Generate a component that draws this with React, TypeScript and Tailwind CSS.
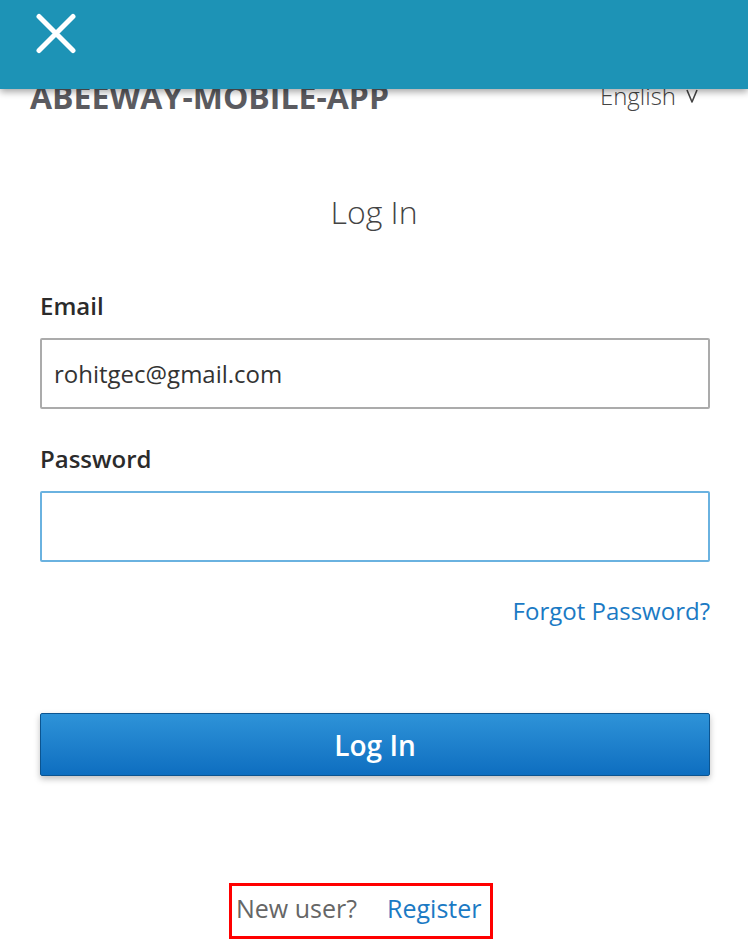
import React from "react";

function CloseIcon() {
  return (
    <svg width="42" height="41" viewBox="0 0 42 41" fill="none" aria-hidden="true">
      <path d="M4 3.5L38 37.5M38 3.5L4 37.5" stroke="#ffffff" strokeWidth="5" strokeLinecap="round" />
    </svg>
  );
}

function Chevron() {
  return (
    <svg width="12" height="14" viewBox="0 0 12 14" fill="none" aria-hidden="true">
      <path d="M1 1L6 13L11 1" stroke="#444" strokeWidth="1.6" strokeLinejoin="round" />
    </svg>
  );
}

export default function App() {
  return (
    <div className="relative h-[946px] w-[748px] overflow-hidden bg-white font-['Open_Sans','Liberation_Sans',sans-serif]">
      {/* fixed app bar, lies over the page title */}
      <header className="absolute inset-x-0 top-0 z-10 h-[89px] bg-[#1d93b6] pl-[35px] pt-[13px] shadow-[0_3px_7px_rgba(0,0,0,0.35)]">
        <CloseIcon />
      </header>

      <div className="flex items-start justify-between pl-[30px] pr-[50px] pt-[79px]">
        <h1 className="text-[32px] font-bold leading-[36px] text-[#5b5b60]">ABEEWAY-MOBILE-APP</h1>
        <div className="mt-px flex items-center gap-[10px] text-[24px] font-light leading-[32px] text-[#444]">
          <span>English</span>
          <Chevron />
        </div>
      </div>

      <h2 className="mt-[77px] text-center text-[32px] font-light leading-[40px] text-[#444]">Log In</h2>

      <form className="flex flex-col pl-[40px] pr-[38px]">
        <label className="mt-[58px] text-[24px] font-semibold leading-[32px] text-[#2b2b2b]">Email</label>
        <input
          type="email"
          defaultValue="rohitgec@gmail.com"
          className="mt-[16px] h-[71px] w-full rounded-[2px] border-2 border-[#ababab] px-[12px] text-[24px] text-[#333] outline-none"
        />
        <label className="mt-[34px] text-[24px] font-semibold leading-[32px] text-[#2b2b2b]">Password</label>
        <input
          type="password"
          className="mt-[16px] h-[71px] w-full rounded-[2px] border-2 border-[#6ab2e0] px-[12px] text-[24px] text-[#333] outline-none"
        />
        <div className="mt-[33px] flex justify-end">
          <a className="text-[24px] leading-[32px] text-[#1b7ac4]">Forgot Password?</a>
        </div>
        <button
          type="button"
          className="mt-[86px] h-[63px] w-full rounded-[2px] border border-[#0b5490] bg-gradient-to-b from-[#2e93d8] to-[#0d6ec0] text-[28px] font-semibold text-white shadow-[0_3px_6px_rgba(0,0,0,0.25)]"
        >
          Log In
        </button>
      </form>

      <div className="ml-[229px] mt-[107px] flex h-[56px] w-[264px] items-center gap-[30px] border-[3px] border-[#ff0000] pb-[4px] pl-[4px] text-[25px]">
        <span className="text-[#666]">New user?</span>
        <a className="text-[#1b7ac4]">Register</a>
      </div>
    </div>
  );
}
